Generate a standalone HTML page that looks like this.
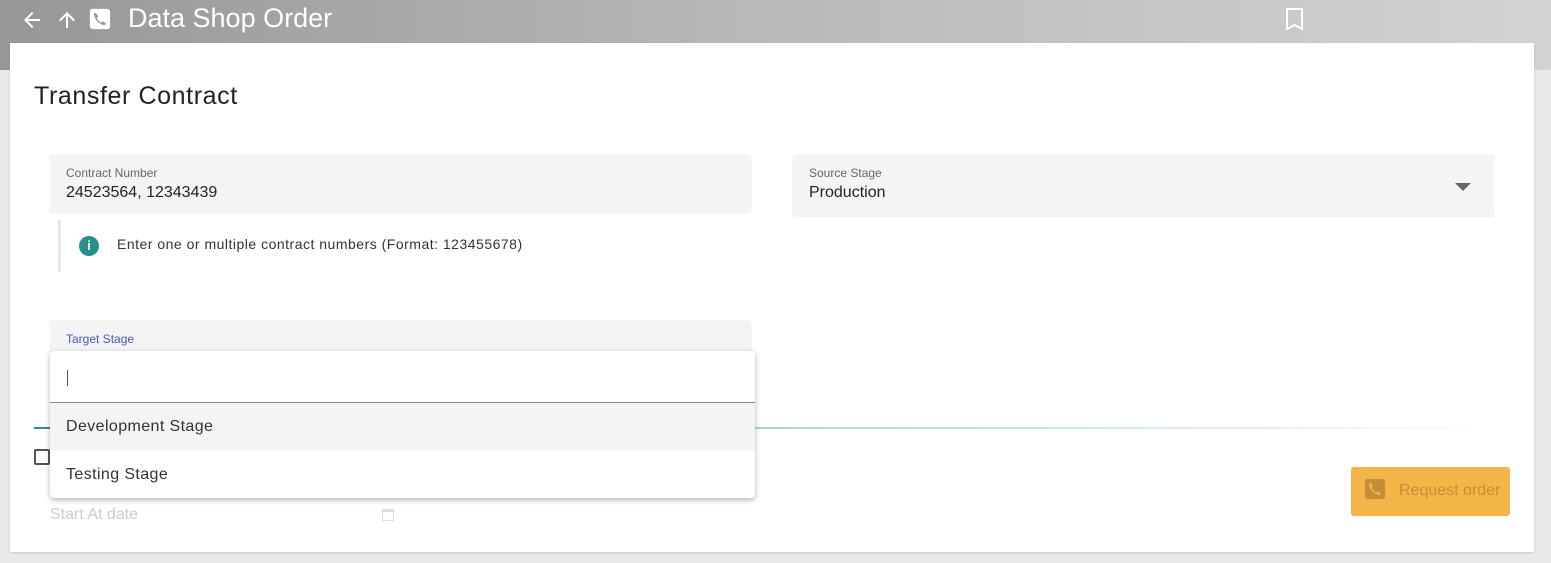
<!DOCTYPE html>
<html><head><meta charset="utf-8"><style>
*{box-sizing:border-box;margin:0;padding:0}
body{width:1551px;height:563px;background:#e9e9e9;font-family:"Liberation Sans",sans-serif;position:relative;overflow:hidden}
.hdr{position:absolute;left:0;top:0;width:1551px;height:70px;background:linear-gradient(90deg,#979797,#b9b9b9 50%,#d3d3d3)}
.title{position:absolute;left:128px;top:3px;color:#fff;font-size:27px}
.card{position:absolute;left:10px;top:43px;width:1524px;height:509px;background:#fff;box-shadow:0 1px 2px rgba(0,0,0,.15)}
.abs{position:absolute}
.field{position:absolute;background:#f4f4f4;border-radius:3px;box-shadow:0 0 1px rgba(0,0,0,.2)}
.lbl{position:absolute;left:16px;top:11px;font-size:12px;color:#666}
.val{position:absolute;left:16px;top:29px;font-size:16px;color:#222}
</style></head><body>
<div class="hdr"></div>
<svg class="abs" style="left:20px;top:8px" width="24" height="24" viewBox="0 0 24 24"><path d="M20 11H7.8l5.6-5.6L12 4l-8 8 8 8 1.4-1.4L7.8 13H20z" fill="#fff"/></svg>
<svg class="abs" style="left:55px;top:8px" width="24" height="24" viewBox="0 0 24 24"><path d="M4 12l1.4 1.4L11 7.8V20h2V7.8l5.6 5.6L20 12l-8-8z" fill="#fff"/></svg>
<svg class="abs" style="left:89px;top:8px" width="22" height="22" viewBox="0 0 24 24"><rect x="1" y="1" width="22" height="22" rx="3" fill="#fff"/><path d="M7 5c-1 .5-2 1.5-1.5 3 1.5 5 5 9 10 10.5 1.5.5 2.5-.5 3-1.5l-3-2.5-2 1.5c-2-1-4-3-5-5l1.5-2z" fill="#979797"/></svg>
<div class="title">Data Shop Order</div>
<svg class="abs" style="left:1284px;top:7px" width="22" height="24" viewBox="0 0 22 24"><path d="M3 2h15v20l-7.5-4L3 22z" fill="none" stroke="#fff" stroke-width="2"/></svg>
<div class="card"></div>
<div class="abs" style="left:34px;top:82px;font-size:25px;color:#222;letter-spacing:.6px">Transfer Contract</div>
<div class="field" style="left:50px;top:155px;width:701px;height:58px"><div class="lbl">Contract Number</div><div class="val">24523564, 12343439</div></div>
<div class="abs" style="left:58px;top:220px;width:3px;height:52px;background:#e6e6e6"></div>
<div class="abs" style="left:79px;top:236px;width:20px;height:20px;border-radius:50%;background:#268f8a;color:#fff;font-weight:bold;font-size:13px;text-align:center;line-height:20px">i</div>
<div class="abs" style="left:117px;top:236px;font-size:14px;color:#333;letter-spacing:.5px">Enter one or multiple contract numbers (Format: 123455678)</div>
<div class="field" style="left:793px;top:155px;width:701px;height:62px"><div class="lbl">Source Stage</div><div class="val">Production</div>
<div class="abs" style="left:662px;top:28px;width:0;height:0;border-left:8px solid transparent;border-right:8px solid transparent;border-top:8px solid #666"></div></div>
<div class="field" style="left:50px;top:321px;width:701px;height:40px"><div class="lbl" style="color:#4a55b5">Target Stage</div></div>
<div class="abs" style="left:34px;top:427px;width:1460px;height:2px;background:linear-gradient(90deg,#268f8a,#a9d6d4 50%,#fff)"></div>
<div class="abs" style="left:34px;top:449px;width:16px;height:16px;border:2px solid #555;border-radius:2px"></div>
<div class="abs" style="left:50px;top:506px;font-size:16px;color:#ccc">Start At date</div>
<div class="abs" style="left:382px;top:509px;width:12px;height:12px;border:1.5px solid #ddd;border-top-width:3px"></div>
<div class="abs" style="left:50px;top:351px;width:705px;height:147px;background:#fff;border-radius:4px;box-shadow:0 2px 6px rgba(0,0,0,.3)">
<div class="abs" style="left:17px;top:19px;width:1px;height:16px;background:#555"></div>
<div class="abs" style="left:0;top:51px;width:705px;height:1px;background:#888"></div>
<div class="abs" style="left:0;top:52px;width:705px;height:48px;background:#f4f4f4"></div>
<div class="abs" style="left:16px;top:67px;font-size:16px;color:#333;letter-spacing:.4px">Development Stage</div>
<div class="abs" style="left:16px;top:115px;font-size:16px;color:#333;letter-spacing:.4px">Testing Stage</div>
</div>
<div class="abs" style="left:1351px;top:467px;width:159px;height:49px;background:#f4b548;border-radius:3px">
<svg class="abs" style="left:13px;top:11px" width="22" height="22" viewBox="0 0 24 24"><rect x="1" y="1" width="22" height="22" rx="3" fill="#c48d38"/><path d="M7 5c-1 .5-2 1.5-1.5 3 1.5 5 5 9 10 10.5 1.5.5 2.5-.5 3-1.5l-3-2.5-2 1.5c-2-1-4-3-5-5l1.5-2z" fill="#f4b548"/></svg>
<div class="abs" style="left:48px;top:15px;font-size:16px;color:#c48d38">Request order</div></div>
</body></html>
